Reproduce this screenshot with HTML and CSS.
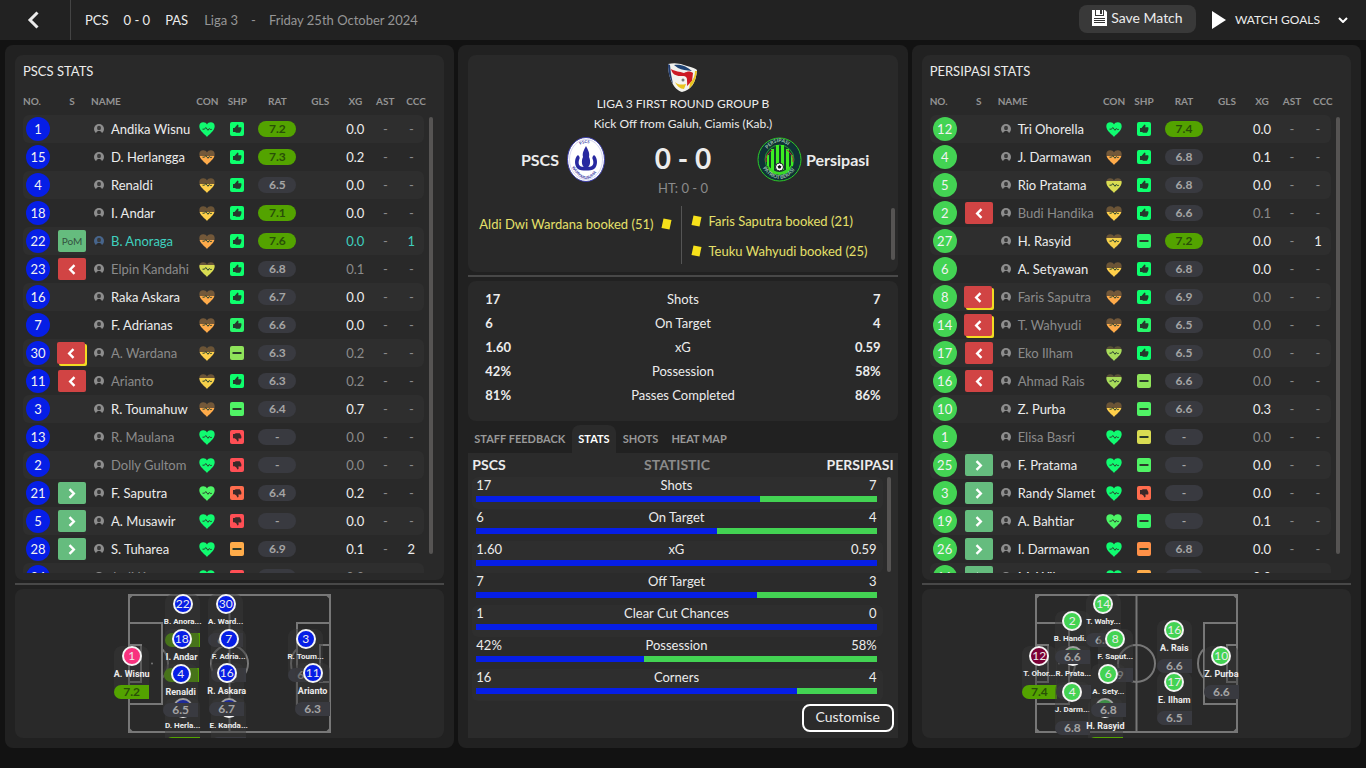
FILE: index.html
```html
<!DOCTYPE html>
<html lang="en">
<head>
<meta charset="utf-8">
<title>PSCS 0 - 0 Persipasi</title>
<link rel="stylesheet" href="styles.css">
</head>
<body>
<svg class="defs" aria-hidden="true">
  <defs>
    <linearGradient id="con-full"><stop stop-color="#10fb70"/></linearGradient>
    <linearGradient id="con-high"><stop stop-color="#4cf566"/></linearGradient>
    <linearGradient id="con-lime" x1="0" y1="0" x2="0" y2="1"><stop offset=".16" stop-color="#5a5236"/><stop offset=".16" stop-color="#a8dc5a"/></linearGradient>
    <linearGradient id="con-yellow" x1="0" y1="0" x2="0" y2="1"><stop offset=".22" stop-color="#67543a"/><stop offset=".22" stop-color="#d9dc52"/></linearGradient>
    <linearGradient id="con-amber" x1="0" y1="0" x2="0" y2="1"><stop offset=".27" stop-color="#6b5436"/><stop offset=".27" stop-color="#f5d04a"/></linearGradient>
    <linearGradient id="con-gold" x1="0" y1="0" x2="0" y2="1"><stop offset=".42" stop-color="#6b5436"/><stop offset=".42" stop-color="#ffcf4a"/></linearGradient>
    <linearGradient id="con-orange" x1="0" y1="0" x2="0" y2="1"><stop offset=".42" stop-color="#735839"/><stop offset=".42" stop-color="#ffab4a"/></linearGradient>
    <symbol id="heart" viewBox="0 0 16 15"><path d="M8 15C6.600 12.800.3 9.200.3 4.300.3 1.600 2 .2 4.200.2 6 .2 7.300 1.100 8 2.500 8.700 1.100 10 .2 11.800.2 14 .2 15.700 1.600 15.700 4.300 15.700 9.200 9.400 12.800 8 15z"/><path d="M3.500 7.200h2l1.300-1.700L9 8.300l1.200-1.800 1 .9h1.600" fill="none" stroke="#2c4632" stroke-width="1"/></symbol>
    <symbol id="up" viewBox="0 0 14 14"><rect width="14" height="14" rx="2" fill="currentColor"/><path d="M3 6h1.500L7.500 2.500c1 0 1.300 1 .7 2.700H11c.7.500.7 1.200.2 1.700.4.600.3 1.100-.2 1.500.1.700-.1 1.100-.7 1.300 0 .7-.4 1-1 1H6.300L5 10H3z" fill="#26382d"/></symbol>
    <symbol id="down" viewBox="0 0 14 14"><rect width="14" height="14" rx="2" fill="currentColor"/><path d="M3 4h1.500l1.300-.8h3.400c.7 0 1 .4 1 1 .6.200.8.600.7 1.200.6.400.7 1 .3 1.500.5.600.3 1.200-.3 1.500H8.300c.7 1.800.2 3-.8 3.100L6.200 9.300 4.500 8.200H3z" fill="#3b2929"/></symbol>
    <symbol id="minus" viewBox="0 0 14 14"><rect width="14" height="14" rx="2" fill="currentColor"/><rect x="2.500" y="6" width="9" height="2" rx=".5" fill="#2a3a2a"/></symbol>
    <symbol id="person" viewBox="0 0 10 10"><circle cx="5" cy="5" r="5" fill="currentColor"/><ellipse cx="5" cy="4" rx="2" ry="2.300" fill="#3a3a3a"/><path d="M2 10q0-2.500 2-3h2q2 .5 2 3z" fill="#292929"/></symbol>
    <symbol id="chev-left" viewBox="0 0 12 18"><path d="M10.500 1.500 3 9l7.500 7.500" fill="none" stroke="currentColor" stroke-width="3"/></symbol>
    <symbol id="tile-left" viewBox="0 0 8 11"><path d="M6.500 1.200 2.200 5.500 6.500 9.800" fill="none" stroke="currentColor" stroke-width="2.400"/></symbol>
    <symbol id="tile-right" viewBox="0 0 8 11"><path d="M1.500 1.200 5.800 5.500 1.500 9.800" fill="none" stroke="currentColor" stroke-width="2.400"/></symbol>
    <symbol id="booking" viewBox="0 0 11 12"><path d="M2.500.5 10.500 2 8.500 11.500.5 10z" fill="#f7e11a"/></symbol>
    <symbol id="pitch" viewBox="0 0 203 139"><g fill="none" stroke="#777" stroke-width="2"><path d="M1 1h201v137H1zM101.500 1v137M1 29h33v81H1M1 51h12v37H1M202 29h-33v81h33M202 51h-10v37h10"/><circle cx="101.500" cy="69.500" r="18.500"/><path d="M34 55c8 7 8 22 0 29M169 55c-8 7-8 22 0 29M1 4l3-3M1 135l3 3M202 4l-3-3M202 135l-3 3"/></g><circle cx="24" cy="69.500" r="1" fill="#777"/></symbol>
  </defs>
</svg>

<header class="topbar">
  <button class="back" aria-label="Back"><svg class="back-icon"><use href="#chev-left"/></svg></button>
  <div class="fixture"><span>PCS</span><span>0 - 0</span><span>PAS</span></div>
  <div class="occasion"><span>Liga 3</span><span>-</span><span>Friday 25th October 2024</span></div>
  <div class="actions">
    <button class="save"><svg class="disk" viewBox="0 0 15 16" aria-hidden="true"><path d="M0 0h3v6h9V0h1l2 2v14H0z" fill="#fff"/><path d="M4 0h7v5H4z" fill="#fff"/><path d="M8 0h2v4H8zM2 8h11v1H2zM2 10h11v1H2zM2 12h11v1H2z" fill="#333"/></svg>Save Match</button>
    <button class="watch"><svg class="play" viewBox="0 0 14 18" aria-hidden="true"><path d="M0 0 14 9 0 18z" fill="#fff"/></svg>WATCH GOALS<svg class="more" viewBox="0 0 10 6" aria-hidden="true"><path d="M1 1l4 4 4-4" fill="none" stroke="#fff" stroke-width="2"/></svg></button>
  </div>
</header>

<main class="board">
  <section class="panel">
    <div class="card squad">
      <h2 class="squad-title">PSCS STATS</h2>
      <div class="squad-scroll"><table class="players home" id="home-players"></table><span class="thumb"></span></div>
    </div>
    <hr class="rule">
    <div class="card field"><div class="field-canvas home" id="home-field"></div></div>
  </section>

  <section class="panel">
    <div class="card match">
      <svg class="league" viewBox="0 0 29 29" aria-hidden="true"><path d="M0 1Q10-1 19 3 27 5 29 7C28 20 23 27 14 29 6 27 0 15 0 1z" fill="#f2f2ee"/><path d="M0 1c0 9 2 15 5 20L3 11 2 2z" fill="#223c6e"/><path d="M6 2c8-1 13 2 18 6-6-1-10-1-14-3z" fill="#1f4374"/><path d="M3 6c5 3 8 2 13 4 4-2 6-2 9 0l-1 8-5 5c1-8-2-10-7-10C8 13 4 11 3 6z" fill="#cc1a24"/><path d="M29 8c-1 8-3 13-8 18l1-6c4-4 5-8 5-12zM7 19c3 3 6 3 11 2l-2 5c-4 0-7-3-9-7z" fill="#e9c41f"/><circle cx="15" cy="17" r="4" fill="#f4f4f0"/><circle cx="15" cy="17" r="1.500" fill="#777"/></svg>
      <p class="competition">LIGA 3 FIRST ROUND GROUP B</p>
      <p class="venue">Kick Off from Galuh, Ciamis (Kab.)</p>
      <div class="scoreline">
        <div class="team team-home">PSCS
          <svg class="crest crest-home" viewBox="0 0 38 45"><ellipse cx="19" cy="22.500" rx="18.500" ry="22" fill="#fff" stroke="#3d3fa8"/><ellipse cx="19" cy="22.500" rx="16.500" ry="20" fill="none" stroke="#a9abe0" stroke-width=".5"/><path d="M19 9c2 4 4 7 3 11 2 4 1 9-1 10 5 0 6-3 5-7-1-2-1-3 1-5 4 3 4 11 0 14-3 2-13 2-16 0-4-3-4-11 0-14 2 2 2 3 1 5-1 4 0 7 5 7-2-1-3-6-1-10-1-4 1-7 3-11z" fill="#2729a0"/><path id="ha" d="M8 14q11-16 22 0" fill="none"/><path id="hb" d="M3 27q16 30 32 0" fill="none"/><text class="crest-text home-text"><textPath href="#ha" startOffset="28%">PSCS</textPath></text><text class="crest-text home-text"><textPath href="#hb" startOffset="8%">WIJAYAKUSUMA</textPath></text></svg>
        </div>
        <strong class="score">0 - 0</strong>
        <div class="team team-away">
          <svg class="crest crest-away" viewBox="0 0 45 45"><circle cx="22.500" cy="22.500" r="21.500" fill="#103235" stroke="#2ccb28"/><circle cx="22.500" cy="22.500" r="14.500" fill="#123b2b" stroke="#259a35"/><path d="M14 12h3v22h-3zM19 8h3v25h-3zM24 8h3v25h-3zM29 12h3v22h-3zM10 18h2v11h-2zM34 18h2v11h-2z" fill="#3dee22"/><path d="M10 27q12 16 25 0l-3 8q-9 6-19 0z" fill="#39dc25"/><path d="M9 25q-1-7 6-12M36 25q1-7-6-12" fill="none" stroke="#b4313a"/><circle cx="22.500" cy="30" r="4" fill="#fff" stroke="#142820"/><path d="M22.500 28l2 1.500-1 2h-2l-1-2z" fill="#111"/><path id="aa" d="M8 15q14.500-20 29 0" fill="none"/><path id="ab" d="M5 30q17.500 24 35 0" fill="none"/><text class="crest-text away-text"><textPath href="#aa" startOffset="10%">PERSIPASI</textPath></text><text class="crest-text away-text"><textPath href="#ab" startOffset="3%">PATRIOT BEKASI</textPath></text></svg>
          Persipasi</div>
      </div>
      <p class="half-time">HT: 0 - 0</p>
      <div class="events">
        <ul class="event-list event-home"><li>Aldi Dwi Wardana booked (51)<svg class="booking"><use href="#booking"/></svg></li></ul>
        <ul class="event-list event-away"><li><svg class="booking"><use href="#booking"/></svg>Faris Saputra booked (21)</li><li><svg class="booking"><use href="#booking"/></svg>Teuku Wahyudi booked (25)</li></ul>
        <span class="thumb"></span>
      </div>
    </div>
    <hr class="rule">
    <div class="card summary">
      <dl class="summary-list" id="summary"></dl>
    </div>
    <nav class="tabs"><button class="tab">STAFF FEEDBACK</button><button class="tab tab-active">STATS</button><button class="tab">SHOTS</button><button class="tab">HEAT MAP</button></nav>
    <div class="compare">
      <div class="compare-head"><span>PSCS</span><span class="muted">STATISTIC</span><span>PERSIPASI</span></div>
      <div class="compare-body"><div class="compare-rows" id="compare"></div><span class="thumb"></span></div>
      <button class="customise">Customise</button>
    </div>
  </section>

  <section class="panel">
    <div class="card squad">
      <h2 class="squad-title">PERSIPASI STATS</h2>
      <div class="squad-scroll"><table class="players away" id="away-players"></table><span class="thumb"></span></div>
    </div>
    <hr class="rule">
    <div class="card field"><div class="field-canvas away" id="away-field"></div></div>
  </section>
</main>
<script src="app.js"></script>
</body>
</html>
```
FILE: styles.css
```css
* { box-sizing: border-box; }
body {
  margin: 0;
  height: 100vh;
  min-height: 760px;
  display: flex;
  flex-direction: column;
  background: #121212;
  color: #ececec;
  font: 13px/16px Lato, "Open Sans", sans-serif;
}
h2, p, ul, dl, dd { margin: 0; padding: 0; }
ul { list-style: none; }
button { font: inherit; color: inherit; background: none; border: 0; padding: 0; cursor: pointer; }
.defs { position: absolute; width: 0; height: 0; }
.muted { color: #8b8b8b; }

.topbar { display: flex; align-items: center; height: 40px; flex: none; background: #222; }
.back { width: 71px; height: 40px; border-right: 1px solid #444; padding-right: 4px; }
.back-icon { width: 12px; height: 18px; display: block; margin: 0 auto; }
.fixture { display: flex; gap: 15px; padding-left: 14px; }
.occasion { display: flex; gap: 13px; padding-left: 16px; color: #969696; }
.actions { margin-left: auto; display: flex; align-items: center; gap: 16px; padding-right: 18px; }
.save { display: flex; align-items: center; justify-content: center; gap: 4px; width: 117px; height: 28px; margin-bottom: 2px; padding-bottom: 2px; border-radius: 8px; background: #393939; font-size: 14px; }
.disk { width: 15px; height: 16px; }
.watch { display: flex; align-items: center; font-size: 12px; }
.play { width: 14px; height: 18px; margin-right: 9px; }
.more { width: 10px; height: 6px; margin-left: 18px; }

.board { flex: 1; min-height: 0; display: grid; grid-template-columns: repeat(3, minmax(0, 1fr)); gap: 4px; padding: 5px 5px 20px; }
.panel { display: flex; flex-direction: column; min-height: 0; padding: 10px; border-radius: 8px; background: #212121; }
.card { border-radius: 8px; background: #292929; }
.rule { width: 100%; height: 2px; margin: 3px 0 4px; border: 0; flex: none; background: #484848; }
.thumb { flex: none; width: 4px; border-radius: 2px; background: #565453; }

.squad { flex: 1; min-height: 0; display: flex; flex-direction: column; padding: 8px 11px 7px 8px; }
.squad-title { font-size: 13px; line-height: 16px; font-weight: 400; }
.squad-scroll { flex: 1; min-height: 0; display: flex; align-items: flex-start; gap: 5px; margin-top: 14px; overflow: hidden; }
.squad-scroll .thumb { height: 91%; margin-top: 24px; }
.players { flex: 1; width: 0; table-layout: fixed; border-collapse: collapse; }
.col-no { width: 32px; }
.col-s { width: 34px; }
.col-icon { width: 30px; }
.col-rat { width: 50px; }
.col-gls { width: 36px; }
.col-xg { width: 34px; }
.col-tail { width: 26px; }
.players th { height: 22px; padding: 0 0 6px; font-size: 10px; line-height: 12px; font-weight: 700; color: #939393; white-space: nowrap; }
.players th:first-child { text-align: left; }
.players .th-name { text-align: left; padding-left: 2px; }
.players .th-ccc { text-align: left; padding-left: 8px; }
.players td { height: 28px; padding: 0; text-align: center; }
.players tbody tr:nth-child(odd) td { background: #2e2e2e; }
.players td:first-child { border-radius: 6px 0 0 6px; }
.players td:last-child { border-radius: 0 6px 6px 0; }
.home { --kit: #061ee6; }
.away { --kit: #43d353; }
.shirt { display: block; width: 24px; margin-left: 3px; border-radius: 50%; background: var(--kit); color: #f2f2f2; line-height: 24px; }
.tile { display: flex; align-items: center; justify-content: center; width: 28px; height: 22px; margin-left: 3px; border-radius: 2px; font-size: 10px; color: #fff; }
.tile svg { width: 8px; height: 11px; }
.tile-off { background: #d14444; }
.tile-on { background: #65bc7e; }
.tile-pom { background: #65bc7e; color: #34523e; }
.tile-booked { margin-left: 2px; box-shadow: 2px 2px 0 #f2db22; }
.name { display: flex; align-items: center; gap: 7px; padding-left: 5px; white-space: nowrap; }
.name svg { flex: none; width: 10px; height: 10px; color: #8e8e8e; }
.heart, .shape { display: block; margin: 0 auto; }
.heart { width: 16px; height: 15px; }
.shape { width: 14px; height: 14px; }
.rating { display: block; width: 38px; margin: 0 auto; border-radius: 8px; background: #393a40; color: #a5a5a5; font-size: 12px; font-weight: 700; line-height: 16px; }
.rating-good { background: #53a300; color: #294f08; }
.row-out { color: #8b8b8b; }
.row-best { color: #3fd0bf; }
.row-best .name svg { color: #47658c; }
.dash { color: #8b8b8b; }

.field { height: 149px; flex: none; padding-top: 5px; overflow: hidden; }
.field-canvas { position: relative; width: 203px; height: 139px; margin: 0 auto; }
.pitch { display: block; width: 203px; height: 139px; }
.node { position: absolute; width: 35px; height: 53px; margin: -10px 0 0 -17px; border-radius: 8px 8px 0 8px; background: rgba(58, 58, 58, .45); text-align: center; white-space: nowrap; }
.node-no { display: block; width: 20px; margin: 0 auto; border: 2px solid #f4f4f4; border-radius: 50%; background: var(--kit); font-size: 12px; line-height: 16px; }
.home .node-keeper { background: #f8327e; }
.away .node-keeper { background: #7b0036; }
.node-name { display: flex; justify-content: center; font: 700 9px/16px Roboto, sans-serif; }
.node-long { font-size: 8px; }
.node-rat { margin-top: 3px; border-radius: 8px 0 0 8px; background: #393a40; color: #a5a5a5; font-size: 12px; font-weight: 700; line-height: 14px; }
.node-good { background: #53a300; color: #294f08; }

.match { padding: 8px 3px; text-align: center; }
.league { display: block; width: 29px; height: 29px; margin: 0 auto 4px; }
.competition, .venue { font-size: 12px; }
.venue { margin-top: 4px; }
.scoreline { display: grid; grid-template-columns: 1fr 120px 1fr; align-items: center; margin-top: 5px; }
.team { display: flex; align-items: center; font-size: 16px; font-weight: 700; }
.team-home { justify-content: flex-end; gap: 8px; padding-right: 18px; }
.team-away { gap: 4px; padding-left: 14px; }
.crest { height: 45px; flex: none; }
.crest-home { width: 38px; }
.crest-away { width: 45px; }
.crest-text { font-size: 5px; font-weight: 700; }
.home-text { fill: #3638a5; font-size: 4px; }
.away-text { fill: #9fc6b0; }
.score { padding-bottom: 4px; font-size: 28px; line-height: 32px; }
.half-time { line-height: 12px; color: #8b8b8b; }
.events { display: flex; margin-top: 12px; height: 58px; }
.event-list { flex: 1; color: #e6e06a; white-space: nowrap; }
.event-list li { display: flex; align-items: center; gap: 7px; height: 30px; }
.event-home { border-right: 1px solid #555; padding: 3px 9px 0 0; }
.event-home li { justify-content: flex-end; }
.event-away { padding-left: 9px; }
.booking { width: 11px; height: 12px; flex: none; }
.events .thumb { height: 52px; margin-top: 2px; }

.summary { padding: 6px 17px 14px; }
.summary-list { display: grid; grid-template-columns: 70px 1fr 70px; line-height: 24px; }
.summary-list dt { text-align: center; }
.summary-list dd { font-weight: 700; }
.summary-list .away-value { text-align: right; }
.stat { display: contents; }

.tabs { display: flex; gap: 1px; height: 28px; margin-top: 4px; font-size: 11px; font-weight: 700; color: #999; }
.tab { height: 28px; padding: 0 6px; }
.tab-active { border-radius: 8px 8px 0 0; background: #2b2b2b; color: #fff; }
.compare { flex: 1; min-height: 0; display: flex; flex-direction: column; padding: 4px; background: #2b2b2b; }
.compare-head { display: grid; grid-template-columns: 60px 1fr 72px; padding-bottom: 4px; font-size: 14px; font-weight: 700; text-align: center; }
.compare-head span:first-child { text-align: left; }
.compare-head span:last-child { text-align: right; }
.compare-body { flex: 1; min-height: 0; display: flex; gap: 4px; overflow: hidden; padding-right: 3px; }
.compare-body .thumb { height: 95px; }
.compare-rows { flex: 1; }
.compare-row { height: 32px; padding: 0 6px 0 4px; border-radius: 6px; }
.compare-row:nth-child(odd) { background: #2e2e2e; }
.compare-values { display: grid; grid-template-columns: 60px 1fr 60px; text-align: center; }
.compare-values span:first-child { text-align: left; }
.compare-values span:last-child { text-align: right; }
.bar { height: 6px; margin-top: 3px; background: #43d353 linear-gradient(#43d353, #43d353); }
.bar-fill { height: 6px; background: #061ee6; }
.customise { align-self: flex-end; flex: none; width: 92px; height: 28px; margin-bottom: 2px; padding-bottom: 2px; border: 2px solid #fff; border-radius: 8px; font-size: 14px; }
```
FILE: app.js
```js
// Player rows: number, status, name, condition, sharpness, sharpness colour, rating, xG, CCC, row state
const G = '#0dff6d';
const home = [
  [1, '', 'Andika Wisnu', 'full', 'up', G, '7.2', '0.0', '-', ''],
  [15, '', 'D. Herlangga', 'orange', 'up', G, '7.3', '0.2', '-', ''],
  [4, '', 'Renaldi', 'gold', 'up', G, '6.5', '0.0', '-', ''],
  [18, '', 'I. Andar', 'gold', 'up', G, '7.1', '0.0', '-', ''],
  [22, 'pom', 'B. Anoraga', 'orange', 'up', G, '7.6', '0.0', '1', 'best'],
  [23, 'off', 'Elpin Kandahi', 'yellow', 'up', G, '6.8', '0.1', '-', 'out'],
  [16, '', 'Raka Askara', 'orange', 'up', G, '6.7', '0.0', '-', ''],
  [7, '', 'F. Adrianas', 'orange', 'up', '#28f66a', '6.6', '0.0', '-', ''],
  [30, 'booked', 'A. Wardana', 'gold', 'minus', '#8fe35a', '6.3', '0.2', '-', 'out'],
  [11, 'off', 'Arianto', 'amber', 'up', G, '6.3', '0.2', '-', 'out'],
  [3, '', 'R. Toumahuw', 'orange', 'minus', '#50f365', '6.4', '0.7', '-', ''],
  [13, '', 'R. Maulana', 'full', 'down', '#ff4f55', '-', '0.0', '-', 'out'],
  [2, '', 'Dolly Gultom', 'full', 'down', '#ff4f55', '-', '0.0', '-', 'out'],
  [21, 'on', 'F. Saputra', 'high', 'down', '#ff6c4d', '6.4', '0.2', '-', ''],
  [5, 'on', 'A. Musawir', 'full', 'down', '#ff4f55', '-', '0.0', '-', ''],
  [28, 'on', 'S. Tuharea', 'full', 'minus', '#ffac4a', '6.9', '0.1', '2', ''],
  [24, '', 'Jodi Kutto', 'full', 'down', '#ff4f55', '-', '0.0', '-', 'out']
];
const away = [
  [12, '', 'Tri Ohorella', 'full', 'up', G, '7.4', '0.0', '-', ''],
  [4, '', 'J. Darmawan', 'orange', 'up', G, '6.8', '0.1', '-', ''],
  [5, '', 'Rio Pratama', 'yellow', 'up', G, '6.8', '0.0', '-', ''],
  [2, 'off', 'Budi Handika', 'gold', 'up', G, '6.6', '0.1', '-', 'out'],
  [27, '', 'H. Rasyid', 'amber', 'minus', '#28f66a', '7.2', '0.0', '1', ''],
  [6, '', 'A. Setyawan', 'gold', 'up', G, '6.8', '0.0', '-', ''],
  [8, 'booked', 'Faris Saputra', 'orange', 'up', G, '6.9', '0.0', '-', 'out'],
  [14, 'booked', 'T. Wahyudi', 'orange', 'up', '#28f66a', '6.5', '0.0', '-', 'out'],
  [17, 'off', 'Eko Ilham', 'lime', 'up', G, '6.5', '0.0', '-', 'out'],
  [16, 'off', 'Ahmad Rais', 'lime', 'minus', '#8fe35a', '6.6', '0.0', '-', 'out'],
  [10, '', 'Z. Purba', 'gold', 'minus', '#50f365', '6.6', '0.3', '-', ''],
  [1, '', 'Elisa Basri', 'full', 'minus', '#d9dc52', '-', '0.0', '-', 'out'],
  [25, 'on', 'F. Pratama', 'full', 'minus', '#50f365', '-', '0.0', '-', ''],
  [3, 'on', 'Randy Slamet', 'full', 'down', '#ff6c4d', '-', '0.0', '-', ''],
  [19, 'on', 'A. Bahtiar', 'high', 'minus', '#38f468', '-', '0.1', '-', ''],
  [26, 'on', 'I. Darmawan', 'full', 'minus', '#ff9148', '6.8', '0.0', '-', ''],
  [11, 'on', 'M. Wibowo', 'full', 'minus', '#ffac4a', '-', '0.0', '-', '']
];
const icon = (id, cls, attrs) => `<svg class="${cls}" ${attrs || ''} aria-hidden="true"><use href="#${id}"/></svg>`;
const good = r => r !== '-' && Number(r) >= 7;
const tile = s => ({
  '': '',
  pom: '<span class="tile tile-pom">PoM</span>',
  off: `<span class="tile tile-off">${icon('tile-left', '')}</span>`,
  booked: `<span class="tile tile-off tile-booked">${icon('tile-left', '')}</span>`,
  on: `<span class="tile tile-on">${icon('tile-right', '')}</span>`
})[s];
const cols = ['no', 's', 'name', 'icon', 'icon', 'rat', 'gls', 'xg', 'tail', 'tail'];
const heads = ['NO.', 'S', 'NAME', 'CON', 'SHP', 'RAT', 'GLS', 'XG', 'AST', 'CCC'];

function playerTable(id, rows) {
  document.getElementById(id).innerHTML =
    `<colgroup>${cols.map(c => `<col class="col-${c}">`).join('')}</colgroup>` +
    `<thead><tr>${heads.map(h => `<th class="th-${h.replace('.', '').toLowerCase()}">${h}</th>`).join('')}</tr></thead><tbody>` +
    rows.map(([no, status, name, con, shp, colour, rat, xg, ccc, state]) =>
      `<tr class="row-${state}"><td><span class="shirt">${no}</span></td><td>${tile(status)}</td>` +
      `<td><span class="name">${icon('person', '')}${name}</span></td>` +
      `<td>${icon('heart', 'heart', `fill="url(#con-${con})"`)}</td><td>${icon(shp, 'shape', `color="${colour}"`)}</td>` +
      `<td><span class="rating ${good(rat) ? 'rating-good' : ''}">${rat}</span></td><td></td><td>${xg}</td>` +
      `<td class="dash">-</td><td class="${ccc === '-' ? 'dash' : ''}">${ccc}</td></tr>`).join('') + '</tbody>';
}

// Pitch markers in stacking order: number, name, rating, x, y
const homeXI = [
  [1, 'A. Wisnu', '7.2', 3, 62], [15, 'D. Herla...', '7.3', 54, 114], [22, 'B. Anora...', '7.6', 54, 10],
  [18, 'I. Andar', '7.1', 53, 45], [4, 'Renaldi', '6.5', 52, 80], [23, 'E. Kanda...', '6.8', 100, 114],
  [30, 'A. Ward...', '6.3', 97, 10], [7, 'F. Adria...', '6.6', 100, 45], [16, 'R. Askara', '6.7', 98, 79],
  [3, 'R. Toum...', '6.4', 177, 45], [11, 'Arianto', '6.3', 184, 79]
];
const awayXI = [
  [12, 'T. Ohor...', '7.4', 4, 62], [5, 'R. Prata...', '6.8', 38, 62], [2, 'B. Handi...', '6.6', 37, 27],
  [4, 'J. Darm...', '6.8', 37, 98], [27, 'H. Rasyid', '7.2', 70, 114], [14, 'T. Wahy...', '6.5', 68, 10],
  [8, 'F. Saput...', '6.9', 80, 45], [6, 'A. Sety...', '6.8', 73, 80], [16, 'A. Rais', '6.6', 139, 36],
  [17, 'E. Ilham', '6.5', 139, 88], [10, 'Z. Purba', '6.6', 186, 62]
];
function field(id, xi) {
  document.getElementById(id).innerHTML = icon('pitch', 'pitch') + xi.map(([no, name, rat, x, y], i) =>
    `<div class="node" style="left:${x}px;top:${y}px"><span class="node-no ${i ? '' : 'node-keeper'}">${no}</span>` +
    `<div class="node-name ${name.includes('...') ? 'node-long' : ''}">${name}</div>` +
    `<div class="node-rat ${good(rat) ? 'node-good' : ''}">${rat}</div></div>`).join('');
}

const summary = [['17', 'Shots', '7'], ['6', 'On Target', '4'], ['1.60', 'xG', '0.59'], ['42%', 'Possession', '58%'], ['81%', 'Passes Completed', '86%']];
document.getElementById('summary').innerHTML = summary.map(([a, label, b]) =>
  `<div class="stat"><dd>${a}</dd><dt>${label}</dt><dd class="away-value">${b}</dd></div>`).join('');

const compare = [['17', 'Shots', '7', 70.8], ['6', 'On Target', '4', 60], ['1.60', 'xG', '0.59', 100], ['7', 'Off Target', '3', 70],
  ['1', 'Clear Cut Chances', '0', 100], ['42%', 'Possession', '58%', 42], ['16', 'Corners', '4', 80]];
document.getElementById('compare').innerHTML = compare.map(([a, label, b, share]) =>
  `<div class="compare-row"><div class="compare-values"><span>${a}</span><span>${label}</span><span>${b}</span></div>` +
  `<div class="bar"><div class="bar-fill" style="width:${share}%"></div></div></div>`).join('');

playerTable('home-players', home);
playerTable('away-players', away);
field('home-field', homeXI);
field('away-field', awayXI);
```
